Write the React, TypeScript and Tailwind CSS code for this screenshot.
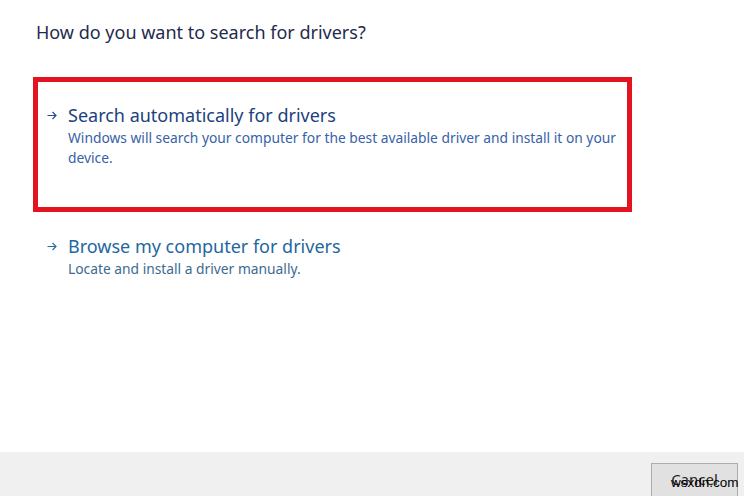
const font = { fontFamily: '"Noto Sans", "Open Sans", sans-serif' };

function Arrow({ color }: { color: string }) {
  return (
    <svg width="10" height="9" viewBox="0 0 10 9" className="mt-[9px] shrink-0" fill="none">
      <path d="M0.5 4.5H9M5.5 1L9 4.5L5.5 8" stroke={color} strokeWidth="1.2" />
    </svg>
  );
}

export default function App() {
  return (
    <div
      className="w-[744px] h-[496px] flex flex-col bg-white overflow-hidden"
      style={font}
    >
      <div className="flex-1 flex flex-col">
        <h1 className="ml-[36px] mt-[19px] text-[18px] leading-[26px] text-[#1f2b4d]">
          How do you want to search for drivers?
        </h1>

        <div className="ml-[33px] mt-[32px] w-[599px] h-[135px] border-[5px] border-[#e3141f] pt-[20px] pl-[9px] pr-[6px]">
          <div className="flex items-start gap-[11px]">
            <Arrow color="#2a4b8a" />
            <div>
              <div className="text-[18px] leading-[26px] text-[#1c3f7e]">
                Search automatically for drivers
              </div>
              <p className="text-[13.8px] leading-[20px] text-[#3762a6]">
                Windows will search your computer for the best available driver and install it on your device.
              </p>
            </div>
          </div>
        </div>

        <div className="ml-[47px] mt-[21px] flex items-start gap-[11px]">
          <Arrow color="#2f6c9a" />
          <div>
            <div className="text-[18px] leading-[26px] text-[#23679f]">
              Browse my computer for drivers
            </div>
            <p className="text-[13.8px] leading-[20px] text-[#3c6a90]">
              Locate and install a driver manually.
            </p>
          </div>
        </div>
      </div>

      <div className="h-[44px] bg-[#f0f0f0] flex justify-end items-start pr-[6px] pt-[11px]">
        <div className="relative w-[87px] h-[40px] bg-[#e1e1e1] border border-[#adadad] flex justify-center pt-[4px]">
          <span className="text-[15px] text-[#222]">Cancel</span>
          <span
            className="absolute left-[19px] top-[11px] text-[13.5px] leading-[16px] text-black"
            style={{ fontFamily: '"Liberation Sans", sans-serif' }}
          >
            wsxdn.com
          </span>
        </div>
      </div>
    </div>
  );
}
